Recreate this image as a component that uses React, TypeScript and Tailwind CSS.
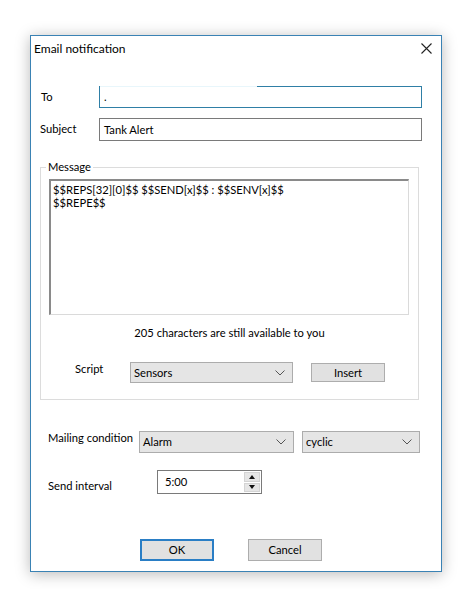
import React from 'react';

const font = { fontFamily: 'Lato, "Segoe UI", sans-serif' };

function Chevron() {
  return (
    <svg width="10" height="6" viewBox="0 0 10 6" className="shrink-0">
      <path d="M0.5 0.5 L5 5 L9.5 0.5" fill="none" stroke="#555" strokeWidth="1" />
    </svg>
  );
}

function Combo({ value, className }: { value: string; className: string }) {
  return (
    <div
      className={`flex shrink-0 items-center justify-between border border-[#acacac] bg-[#e5e5e5] pl-[3px] pr-[7px] ${className}`}
    >
      <span className="leading-none">{value}</span>
      <Chevron />
    </div>
  );
}

function WinButton({ label, isDefault, className }: { label: string; isDefault?: boolean; className: string }) {
  return (
    <button
      className={`flex shrink-0 items-center justify-center bg-[#e1e1e1] leading-none text-black ${
        isDefault ? 'border-2 border-[#2a7ec5]' : 'border border-[#adadad]'
      } ${className}`}
    >
      {label}
    </button>
  );
}

export default function App() {
  return (
    <div className="min-h-[589px] w-[462px] bg-white pl-[30px] pt-[35px] text-[11.2px] text-black" style={font}>
      {/* Dialog window */}
      <div className="h-[537px] w-[412px] border border-[#3a82b4] bg-white shadow-[0_2px_14px_rgba(0,0,0,0.28)]">
        {/* Title bar */}
        <div className="flex h-[25px] items-center justify-between pl-[3px] pr-[9px]">
          <span className="text-[12px]">Email notification</span>
          <svg width="11" height="11" viewBox="0 0 11 11">
            <path d="M0.5 0.5 L10.5 10.5 M10.5 0.5 L0.5 10.5" stroke="#222" strokeWidth="1.1" />
          </svg>
        </div>

        {/* To */}
        <div className="mt-[25px] flex items-center">
          <span className="w-[68px] pl-[10px]">To</span>
          <div className="relative flex h-[22px] w-[323px] items-center border border-[#2f7fa6] pl-[4px]">
            <span className="absolute -top-px left-0 h-px w-[157px] bg-[#e8f6fb]" />
            <span className="leading-none">.</span>
          </div>
        </div>

        {/* Subject */}
        <div className="mt-[10px] flex items-center">
          <span className="w-[68px] pl-[9px]">Subject</span>
          <div className="flex h-[23px] w-[323px] items-center border border-[#7a7a7a] pl-[4px]">
            <span className="leading-none">Tank Alert</span>
          </div>
        </div>

        {/* Message group */}
        <fieldset className="ml-[9px] mt-[19px] w-[379px] border border-[#dcdcdc] px-[8px] pb-[16px]">
          <legend className="ml-[-3px] px-[2px] leading-[14px]">Message</legend>
          <div className="mt-[5px] h-[136px] w-[360px] border-l-2 border-t-2 border-b border-r border-l-[#8a8a8a] border-t-[#8a8a8a] border-b-[#dadada] border-r-[#dadada] px-[2px] pt-[2px] leading-[13px]">
            <div>$$REPS[32][0]$$ $$SEND[x]$$ : $$SENV[x]$$</div>
            <div>$$REPE$$</div>
          </div>
          <div className="mt-[11px] text-center leading-[14px]">205 characters are still available to you</div>
          <div className="mt-[22px] flex items-start">
            <span className="w-[81px] pl-[26px] leading-[14px]">Script</span>
            <Combo value="Sensors" className="h-[21px] w-[163px]" />
            <WinButton label="Insert" className="ml-[18px] mt-px h-[19px] w-[74px]" />
          </div>
        </fieldset>

        {/* Mailing condition */}
        <div className="mt-[31px] flex items-start">
          <span className="w-[108px] whitespace-nowrap pl-[17px] leading-[14px]">Mailing condition</span>
          <Combo value="Alarm" className="h-[22px] w-[155px]" />
          <Combo value="cyclic" className="ml-[8px] h-[22px] w-[118px]" />
        </div>

        {/* Send interval */}
        <div className="mt-[17px] flex items-start">
          <span className="w-[126px] whitespace-nowrap pl-[17px] pt-[9px] leading-[14px]">Send interval</span>
          <div className="flex h-[24px] w-[105px] items-center justify-between border border-[#7a7a7a] pl-[7px] pr-[1px]">
            <span className="leading-none">5:00</span>
            <div className="flex h-[20px] w-[16px] flex-col gap-px">
              <div className="flex flex-1 items-center justify-center border border-[#d4d4d4] bg-[#e6e6e6]">
                <svg width="6" height="4" viewBox="0 0 6 4">
                  <path d="M0 4 L3 0 L6 4 Z" fill="#111" />
                </svg>
              </div>
              <div className="flex flex-1 items-center justify-center border border-[#d4d4d4] bg-[#e6e6e6]">
                <svg width="6" height="4" viewBox="0 0 6 4">
                  <path d="M0 0 L6 0 L3 4 Z" fill="#111" />
                </svg>
              </div>
            </div>
          </div>
        </div>

        {/* Buttons */}
        <div className="mt-[45px] flex items-center pl-[109px]">
          <WinButton label="OK" isDefault className="h-[22px] w-[74px]" />
          <WinButton label="Cancel" className="ml-[34px] h-[22px] w-[74px]" />
        </div>
      </div>
    </div>
  );
}
